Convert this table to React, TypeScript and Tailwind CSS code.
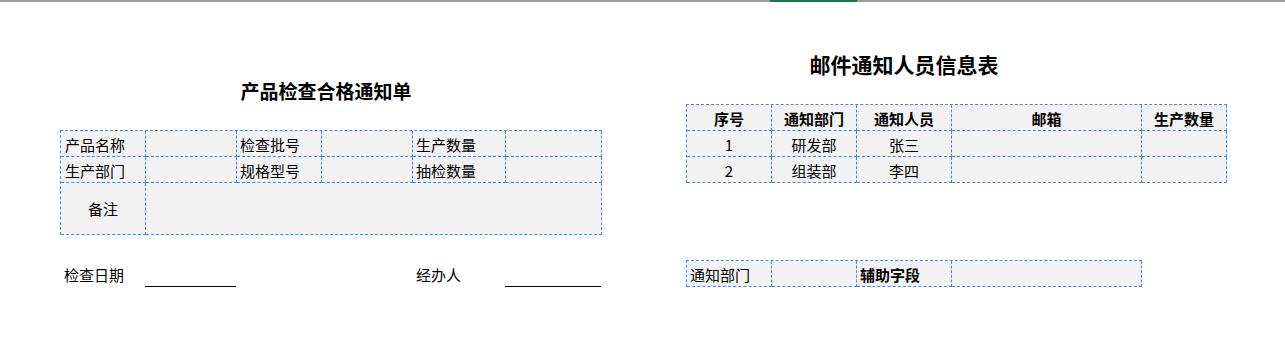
import React from "react";

const cell =
  "h-[26px] border-r border-b border-dashed border-[#4a89dc] bg-[#f2f2f2] leading-[28px] whitespace-nowrap overflow-hidden";
const frame = "grid border-l border-t border-dashed border-[#4a89dc]";

const people = [
  { no: "1", dept: "研发部", name: "张三" },
  { no: "2", dept: "组装部", name: "李四" },
];

export default function App() {
  return (
    <div className="w-[1285px] h-[356px] bg-white text-black text-[15px] font-[family-name:'Noto_Sans_CJK_SC','Noto_Sans',sans-serif]">
      {/* top strip */}
      <div className="flex h-[2px] bg-[#9b9b9b]">
        <div className="ml-[770px] w-[87px] bg-[#217346]" />
      </div>

      <div className="flex pl-[60px]">
        {/* 产品检查合格通知单 */}
        <div className="w-[542px] pt-[76px]">
          <div className="h-[26px] pr-[10px] text-center text-[19px] font-bold leading-[26px]">
            产品检查合格通知单
          </div>

          <div className={`${frame} mt-[26px] grid-cols-[85px_91px_85px_91px_93px_96px]`}>
            <div className={`${cell} pl-[4px]`}>产品名称</div>
            <div className={cell} />
            <div className={`${cell} pl-[3px]`}>检查批号</div>
            <div className={cell} />
            <div className={`${cell} pl-[3px]`}>生产数量</div>
            <div className={cell} />

            <div className={`${cell} pl-[4px]`}>生产部门</div>
            <div className={cell} />
            <div className={`${cell} pl-[3px]`}>规格型号</div>
            <div className={cell} />
            <div className={`${cell} pl-[3px]`}>抽检数量</div>
            <div className={cell} />

            <div className={`${cell} h-[52px] flex items-center justify-center leading-none`}>备注</div>
            <div className={`${cell} h-[52px] col-span-5`} />
          </div>

          <div className="mt-[26px] grid grid-cols-[85px_91px_85px_91px_93px_96px]">
            <div className="h-[26px] pl-[4px] leading-[28px]">检查日期</div>
            <div className="h-[26px] border-b border-black" />
            <div />
            <div />
            <div className="h-[26px] pl-[4px] leading-[28px]">经办人</div>
            <div className="h-[26px] border-b border-black" />
          </div>
        </div>

        {/* 邮件通知人员信息表 */}
        <div className="ml-[84px] w-[541px] pt-[48px]">
          <div className="h-[28px] w-[436px] text-center text-[21px] font-bold leading-[28px]">
            邮件通知人员信息表
          </div>

          <div className={`${frame} mt-[26px] grid-cols-[85px_85px_95px_190px_85px] text-center`}>
            <div className={`${cell} font-bold`}>序号</div>
            <div className={`${cell} font-bold`}>通知部门</div>
            <div className={`${cell} font-bold`}>通知人员</div>
            <div className={`${cell} font-bold`}>邮箱</div>
            <div className={`${cell} font-bold`}>生产数量</div>
            {people.map((p) => (
              <React.Fragment key={p.no}>
                <div className={cell}>{p.no}</div>
                <div className={cell}>{p.dept}</div>
                <div className={cell}>{p.name}</div>
                <div className={cell} />
                <div className={cell} />
              </React.Fragment>
            ))}
          </div>

          <div className={`${frame} mt-[77px] w-[456px] grid-cols-[85px_85px_95px_190px]`}>
            <div className={`${cell} pl-[3px]`}>通知部门</div>
            <div className={cell} />
            <div className={`${cell} pl-[3px] font-bold`}>辅助字段</div>
            <div className={cell} />
          </div>
        </div>
      </div>
    </div>
  );
}
